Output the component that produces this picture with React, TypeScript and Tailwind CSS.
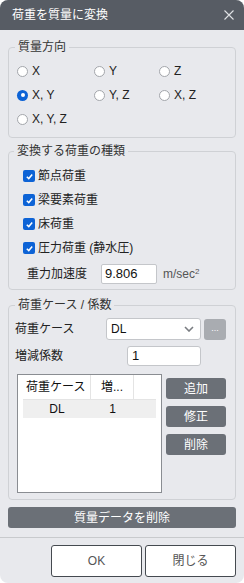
import React from 'react';

const FONT = { fontFamily: '"Liberation Sans", "Noto Sans CJK JP", sans-serif' };

function Radio({ label, checked }: { label: string; checked?: boolean }) {
  return (
    <label className="flex items-center gap-[4px] h-[24px]">
      {checked ? (
        <span className="w-[11px] h-[11px] rounded-full bg-[#0d63d6] flex items-center justify-center">
          <span className="w-[4px] h-[4px] rounded-full bg-white" />
        </span>
      ) : (
        <span className="w-[11px] h-[11px] rounded-full border border-[#a3a6ab] bg-white" />
      )}
      <span className="text-[12px] text-[#222]">{label}</span>
    </label>
  );
}

function Check({ label }: { label: string }) {
  return (
    <label className="flex items-center gap-[3px] h-[24px]">
      <span className="w-[12px] h-[12px] rounded-[2px] bg-[#0d63d6] flex items-center justify-center">
        <svg width="9" height="9" viewBox="0 0 10 10">
          <path d="M2 5.2 L4.2 7.3 L8 2.8" fill="none" stroke="white" strokeWidth="1.7" />
        </svg>
      </span>
      <span className="text-[12px] text-[#222]">{label}</span>
    </label>
  );
}

function GrayButton({ label }: { label: string }) {
  return (
    <button className="w-[60px] h-[21px] rounded-[3px] bg-[#6b7077] text-white text-[12px] leading-none">
      {label}
    </button>
  );
}

export default function App() {
  return (
    <div className="w-[244px] h-[583px] bg-white" style={FONT}>
      <div className="w-[244px] h-[583px] rounded-[8px] overflow-hidden bg-[#e8e9ed] flex flex-col">
        {/* Title bar */}
        <div className="h-[30px] shrink-0 bg-[#575c64] flex items-center justify-between pl-[12px] pr-[10px]">
          <span className="text-white text-[12px]">荷重を質量に変換</span>
          <svg width="10" height="10" viewBox="0 0 10 10">
            <path d="M0.5 0.5 L9.5 9.5 M9.5 0.5 L0.5 9.5" stroke="#dfe1e4" strokeWidth="1.1" />
          </svg>
        </div>

        <div className="px-[8px] flex flex-col">
          {/* 質量方向 */}
          <fieldset className="mt-[9px] border border-[#cfd1d5] rounded-[4px] p-0 pb-[6px]">
            <legend className="ml-[6px] px-[3px] text-[12px] leading-[16px] text-[#333]">質量方向</legend>
            <div className="mt-[4px] pl-[8px] grid grid-cols-[77px_65px_1fr]">
              <Radio label="X" />
              <Radio label="Y" />
              <Radio label="Z" />
              <Radio label="X, Y" checked />
              <Radio label="Y, Z" />
              <Radio label="X, Z" />
              <Radio label="X, Y, Z" />
            </div>
          </fieldset>

          {/* 変換する荷重の種類 */}
          <fieldset className="mt-[5px] border border-[#cfd1d5] rounded-[4px] p-0 pb-[5px]">
            <legend className="ml-[5px] px-[3px] text-[12px] leading-[16px] text-[#333]">変換する荷重の種類</legend>
            <div className="mt-[5px] pl-[14px] flex flex-col">
              <Check label="節点荷重" />
              <Check label="梁要素荷重" />
              <Check label="床荷重" />
              <Check label="圧力荷重 (静水圧)" />
            </div>
            <div className="mt-[4px] pl-[18px] flex items-center">
              <span className="w-[74px] text-[12px] text-[#222]">重力加速度</span>
              <div className="w-[56px] h-[20px] bg-white border border-[#c4c6ca] rounded-[2px] flex items-center pl-[3px] text-[13px] text-[#111]">
                9.806
              </div>
              <span className="ml-[6px] text-[12px] text-[#555]">
                m/sec<sup className="text-[8px]">2</sup>
              </span>
            </div>
          </fieldset>

          {/* 荷重ケース / 係数 */}
          <fieldset className="mt-[7px] border border-[#cfd1d5] rounded-[4px] p-0 pb-[6px]">
            <legend className="ml-[6px] px-[3px] text-[12px] leading-[16px] text-[#333]">荷重ケース / 係数</legend>
            <div className="mt-[5px] pl-[6px] flex items-center">
              <span className="w-[91px] text-[12px] text-[#222]">荷重ケース</span>
              <div className="w-[95px] h-[22px] bg-white border border-[#c4c6ca] rounded-[3px] flex items-center justify-between pl-[4px] pr-[6px]">
                <span className="text-[12px] text-[#111]">DL</span>
                <svg width="10" height="6" viewBox="0 0 10 6">
                  <path d="M1 1 L5 5 L9 1" fill="none" stroke="#7a7d82" strokeWidth="1.6" />
                </svg>
              </div>
              <div className="ml-[3px] w-[22px] h-[21px] rounded-[3px] bg-[#a9acb1] flex items-center justify-center text-white text-[9px]">
                ...
              </div>
            </div>
            <div className="mt-[6px] pl-[6px] flex items-center">
              <span className="w-[112px] text-[12px] text-[#222]">増減係数</span>
              <div className="w-[74px] h-[20px] bg-white border border-[#c4c6ca] rounded-[3px] flex items-center pl-[4px] text-[13px] text-[#111]">
                1
              </div>
            </div>
            <div className="mt-[8px] pl-[8px] flex items-start gap-[4px]">
              <div className="w-[145px] h-[119px] bg-white border border-[#8a8d92] px-[5px]">
                <div className="flex h-[25px] border-b border-[#e4e4e4]">
                  <div className="w-[68px] border-r border-[#e4e4e4] flex items-center pl-[3px] text-[12px] text-[#111]">
                    荷重ケース
                  </div>
                  <div className="w-[43px] border-r border-[#e4e4e4] flex items-center pl-[10px] text-[12px] text-[#111]">
                    増...
                  </div>
                </div>
                <div className="flex h-[18px] bg-[#efefef]">
                  <div className="w-[68px] flex items-center justify-center text-[12px] text-[#111]">DL</div>
                  <div className="w-[43px] flex items-center justify-center text-[12px] text-[#111]">1</div>
                </div>
              </div>
              <div className="mt-[4px] flex flex-col gap-[7px]">
                <GrayButton label="追加" />
                <GrayButton label="修正" />
                <GrayButton label="削除" />
              </div>
            </div>
          </fieldset>

          <button className="mt-[7px] h-[21px] rounded-[3px] bg-[#6b7077] text-white text-[12px] leading-none">
            質量データを削除
          </button>
        </div>

        <div className="mt-[9px] h-px bg-[#c8cacd]" />

        <div className="mt-[7px] pr-[8px] flex justify-end gap-[3px]">
          <button className="w-[91px] h-[32px] bg-white border border-[#454a50] rounded-[3px] text-[12px] text-[#555]">
            OK
          </button>
          <button className="w-[91px] h-[32px] bg-white border border-[#454a50] rounded-[3px] text-[12px] text-[#555]">
            閉じる
          </button>
        </div>
      </div>
    </div>
  );
}
